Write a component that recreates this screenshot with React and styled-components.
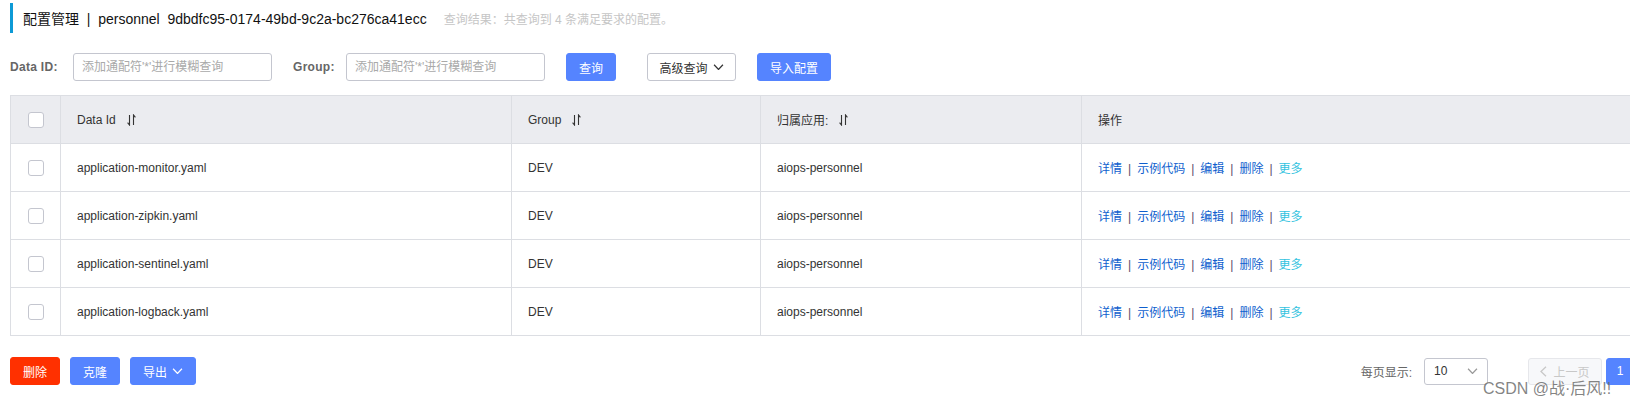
import styled, { createGlobalStyle } from 'styled-components';

const GlobalStyle = createGlobalStyle`
    html {
        overflow: hidden;
    }
    html, body {
        margin: 0;
        padding: 0;
        background: #fff;
    }
    body {
        min-height: 408px;
        font-family: "Liberation Sans", "Noto Sans CJK SC", sans-serif;
        font-size: 12px;
        color: #333;
    }
`;

const Page = styled.div`
    position: relative;
    width: 1706px;
    padding-left: 10px;
    padding-top: 3px;
`;

const TitleBar = styled.div`
    display: flex;
    align-items: center;
    height: 30px;
    border-left: 3px solid #0d9ad6;
    padding-left: 10px;
`;

const Title = styled.span`
    font-size: 14px;
    color: #111;
    white-space: pre;
`;

const Summary = styled.span`
    margin-left: 17px;
    font-size: 12px;
    color: #c6c6c6;
`;

const SearchForm = styled.div`
    display: flex;
    align-items: center;
    margin-top: 20px;
    height: 28px;
`;

const Label = styled.label`
    width: ${({ $w }) => $w}px;
    font-weight: bold;
    color: #666;
    letter-spacing: 0.3px;
`;

const Input = styled.input`
    box-sizing: border-box;
    width: 199px;
    height: 28px;
    border: 1px solid #c4c6cf;
    border-radius: 3px;
    padding: 0 8px;
    font-family: inherit;
    font-size: 12px;
    margin-right: 21px;
    outline: none;

    &::placeholder {
        color: #a9a9a9;
    }
`;

const Button = styled.button`
    box-sizing: border-box;
    display: inline-flex;
    align-items: center;
    justify-content: center;
    gap: 5px;
    height: ${({ $h }) => $h || 28}px;
    width: ${({ $w }) => $w}px;
    margin-right: ${({ $mr }) => $mr || 0}px;
    padding: 0;
    border-radius: 3px;
    font-family: inherit;
    font-size: 12px;
    cursor: pointer;
    border: 1px solid ${({ $variant }) =>
        $variant === 'normal' ? '#c4c6cf' : $variant === 'danger' ? '#ff3000' : '#5584ff'};
    background: ${({ $variant }) =>
        $variant === 'normal' ? '#fff' : $variant === 'danger' ? '#ff3000' : '#5584ff'};
    color: ${({ $variant }) => ($variant === 'normal' ? '#333' : '#fff')};
`;

const Chevron = ({ color = 'currentColor', size = 11 }) => (
    <svg width={size} height={size * 0.6} viewBox="0 0 11 7" fill="none">
        <polyline points="0.8,0.8 5.5,5.8 10.2,0.8" stroke={color} strokeWidth="1.3" />
    </svg>
);

const SortIcon = () => (
    <svg width="9" height="12" viewBox="0 0 9 12" fill="none" stroke="#333" strokeWidth="1.1">
        <path d="M2.5 1V11L0.6 8.6" />
        <path d="M6.5 11V1L8.4 3.4" />
    </svg>
);

const Table = styled.div`
    margin-top: 14px;
    border: 1px solid #dcdee3;
    border-right: none;
`;

const Row = styled.div`
    display: grid;
    grid-template-columns: 49px 451px 249px 321px 1fr;
    height: ${({ $head }) => ($head ? 47 : 48)}px;
    box-sizing: border-box;
    background: ${({ $head }) => ($head ? '#ebecf0' : '#fff')};
    border-top: ${({ $head }) => ($head ? 'none' : '1px solid #dcdee3')};
`;

const Cell = styled.div`
    display: flex;
    align-items: center;
    gap: 11px;
    padding-left: ${({ $center }) => ($center ? 0 : 16)}px;
    justify-content: ${({ $center }) => ($center ? 'center' : 'flex-start')};
    border-left: ${({ $first }) => ($first ? 'none' : '1px solid #dcdee3')};
    color: #333;
    white-space: nowrap;
`;

const Checkbox = styled.span`
    box-sizing: border-box;
    width: 16px;
    height: 16px;
    border: 1px solid #c4c6cf;
    border-radius: 3px;
    background: #fff;
`;

const Actions = styled.div`
    display: flex;
    align-items: center;
`;

const Link = styled.a`
    color: ${({ $light }) => ($light ? '#34c3e0' : '#0f5fce')};
    text-decoration: none;
    cursor: pointer;
`;

const Sep = styled.span`
    color: #5a4a6a;
    margin: 0 6px 0 6px;
`;

const Footer = styled.div`
    display: flex;
    justify-content: space-between;
    align-items: center;
    margin-top: 21px;
`;

const BatchActions = styled.div`
    display: flex;
    gap: 10px;
`;

const Pagination = styled.div`
    display: flex;
    align-items: center;
`;

const PageSizeLabel = styled.span`
    color: #666;
    margin-right: 12px;
`;

const Select = styled.div`
    box-sizing: border-box;
    width: 64px;
    height: 27px;
    display: flex;
    align-items: center;
    justify-content: space-between;
    padding: 0 9px 0 9px;
    border: 1px solid #c4c6cf;
    border-radius: 3px;
    color: #333;
    margin-right: 40px;
`;

const PageButton = styled.button`
    box-sizing: border-box;
    height: 27px;
    width: ${({ $w }) => $w}px;
    margin-right: 4px;
    display: inline-flex;
    align-items: center;
    justify-content: center;
    gap: 6px;
    font-family: inherit;
    font-size: 12px;
    border-radius: 3px;
    border: 1px solid ${({ $active }) => ($active ? '#5584ff' : '#e6e7eb')};
    background: ${({ $active }) => ($active ? '#5584ff' : '#f7f8fa')};
    color: ${({ $active }) => ($active ? '#fff' : '#c8c8c8')};
    padding: 0;
`;

const Watermark = styled.div`
    position: absolute;
    left: 1483px;
    top: 380px;
    font-size: 16px;
    line-height: 18px;
    color: rgba(110, 110, 110, 0.85);
    white-space: nowrap;
`;

const rows = [
    'application-monitor.yaml',
    'application-zipkin.yaml',
    'application-sentinel.yaml',
    'application-logback.yaml',
];

const actions = ['详情', '示例代码', '编辑', '删除'];

const App = () => {
    return (
        <>
            <GlobalStyle />
            <Page>
                <TitleBar>
                    <Title>配置管理  |  personnel  9dbdfc95-0174-49bd-9c2a-bc276ca41ecc</Title>
                    <Summary>查询结果：共查询到 4 条满足要求的配置。</Summary>
                </TitleBar>

                <SearchForm>
                    <Label $w={63}>Data ID:</Label>
                    <Input placeholder="添加通配符'*'进行模糊查询" />
                    <Label $w={53}>Group:</Label>
                    <Input placeholder="添加通配符'*'进行模糊查询" />
                    <Button $w={50} $mr={31}>查询</Button>
                    <Button $w={89} $mr={21} $variant="normal">高级查询 <Chevron /></Button>
                    <Button $w={74}>导入配置</Button>
                </SearchForm>

                <Table>
                    <Row $head>
                        <Cell $first $center><Checkbox /></Cell>
                        <Cell>Data Id <SortIcon /></Cell>
                        <Cell>Group <SortIcon /></Cell>
                        <Cell>归属应用: <SortIcon /></Cell>
                        <Cell>操作</Cell>
                    </Row>
                    {rows.map((id) => (
                        <Row key={id}>
                            <Cell $first $center><Checkbox /></Cell>
                            <Cell>{id}</Cell>
                            <Cell>DEV</Cell>
                            <Cell>aiops-personnel</Cell>
                            <Cell>
                                <Actions>
                                    {actions.map((a) => (
                                        <span key={a}>
                                            <Link>{a}</Link>
                                            <Sep>|</Sep>
                                        </span>
                                    ))}
                                    <Link $light>更多</Link>
                                </Actions>
                            </Cell>
                        </Row>
                    ))}
                </Table>

                <Footer>
                    <BatchActions>
                        <Button $w={50} $variant="danger">删除</Button>
                        <Button $w={50}>克隆</Button>
                        <Button $w={66}>导出 <Chevron /></Button>
                    </BatchActions>
                    <Pagination>
                        <PageSizeLabel>每页显示:</PageSizeLabel>
                        <Select>
                            <span>10</span>
                            <Chevron color="#999" />
                        </Select>
                        <PageButton $w={74}>
                            <svg width="7" height="11" viewBox="0 0 7 11" fill="none">
                                <polyline points="6,0.8 1,5.5 6,10.2" stroke="#c8c8c8" strokeWidth="1.3" />
                            </svg>
                            上一页
                        </PageButton>
                        <PageButton $w={28} $active>1</PageButton>
                        <PageButton $w={74}>下一页</PageButton>
                    </Pagination>
                </Footer>
                <Watermark>CSDN @战·后风!!</Watermark>
            </Page>
        </>
    );
};

export default App;
